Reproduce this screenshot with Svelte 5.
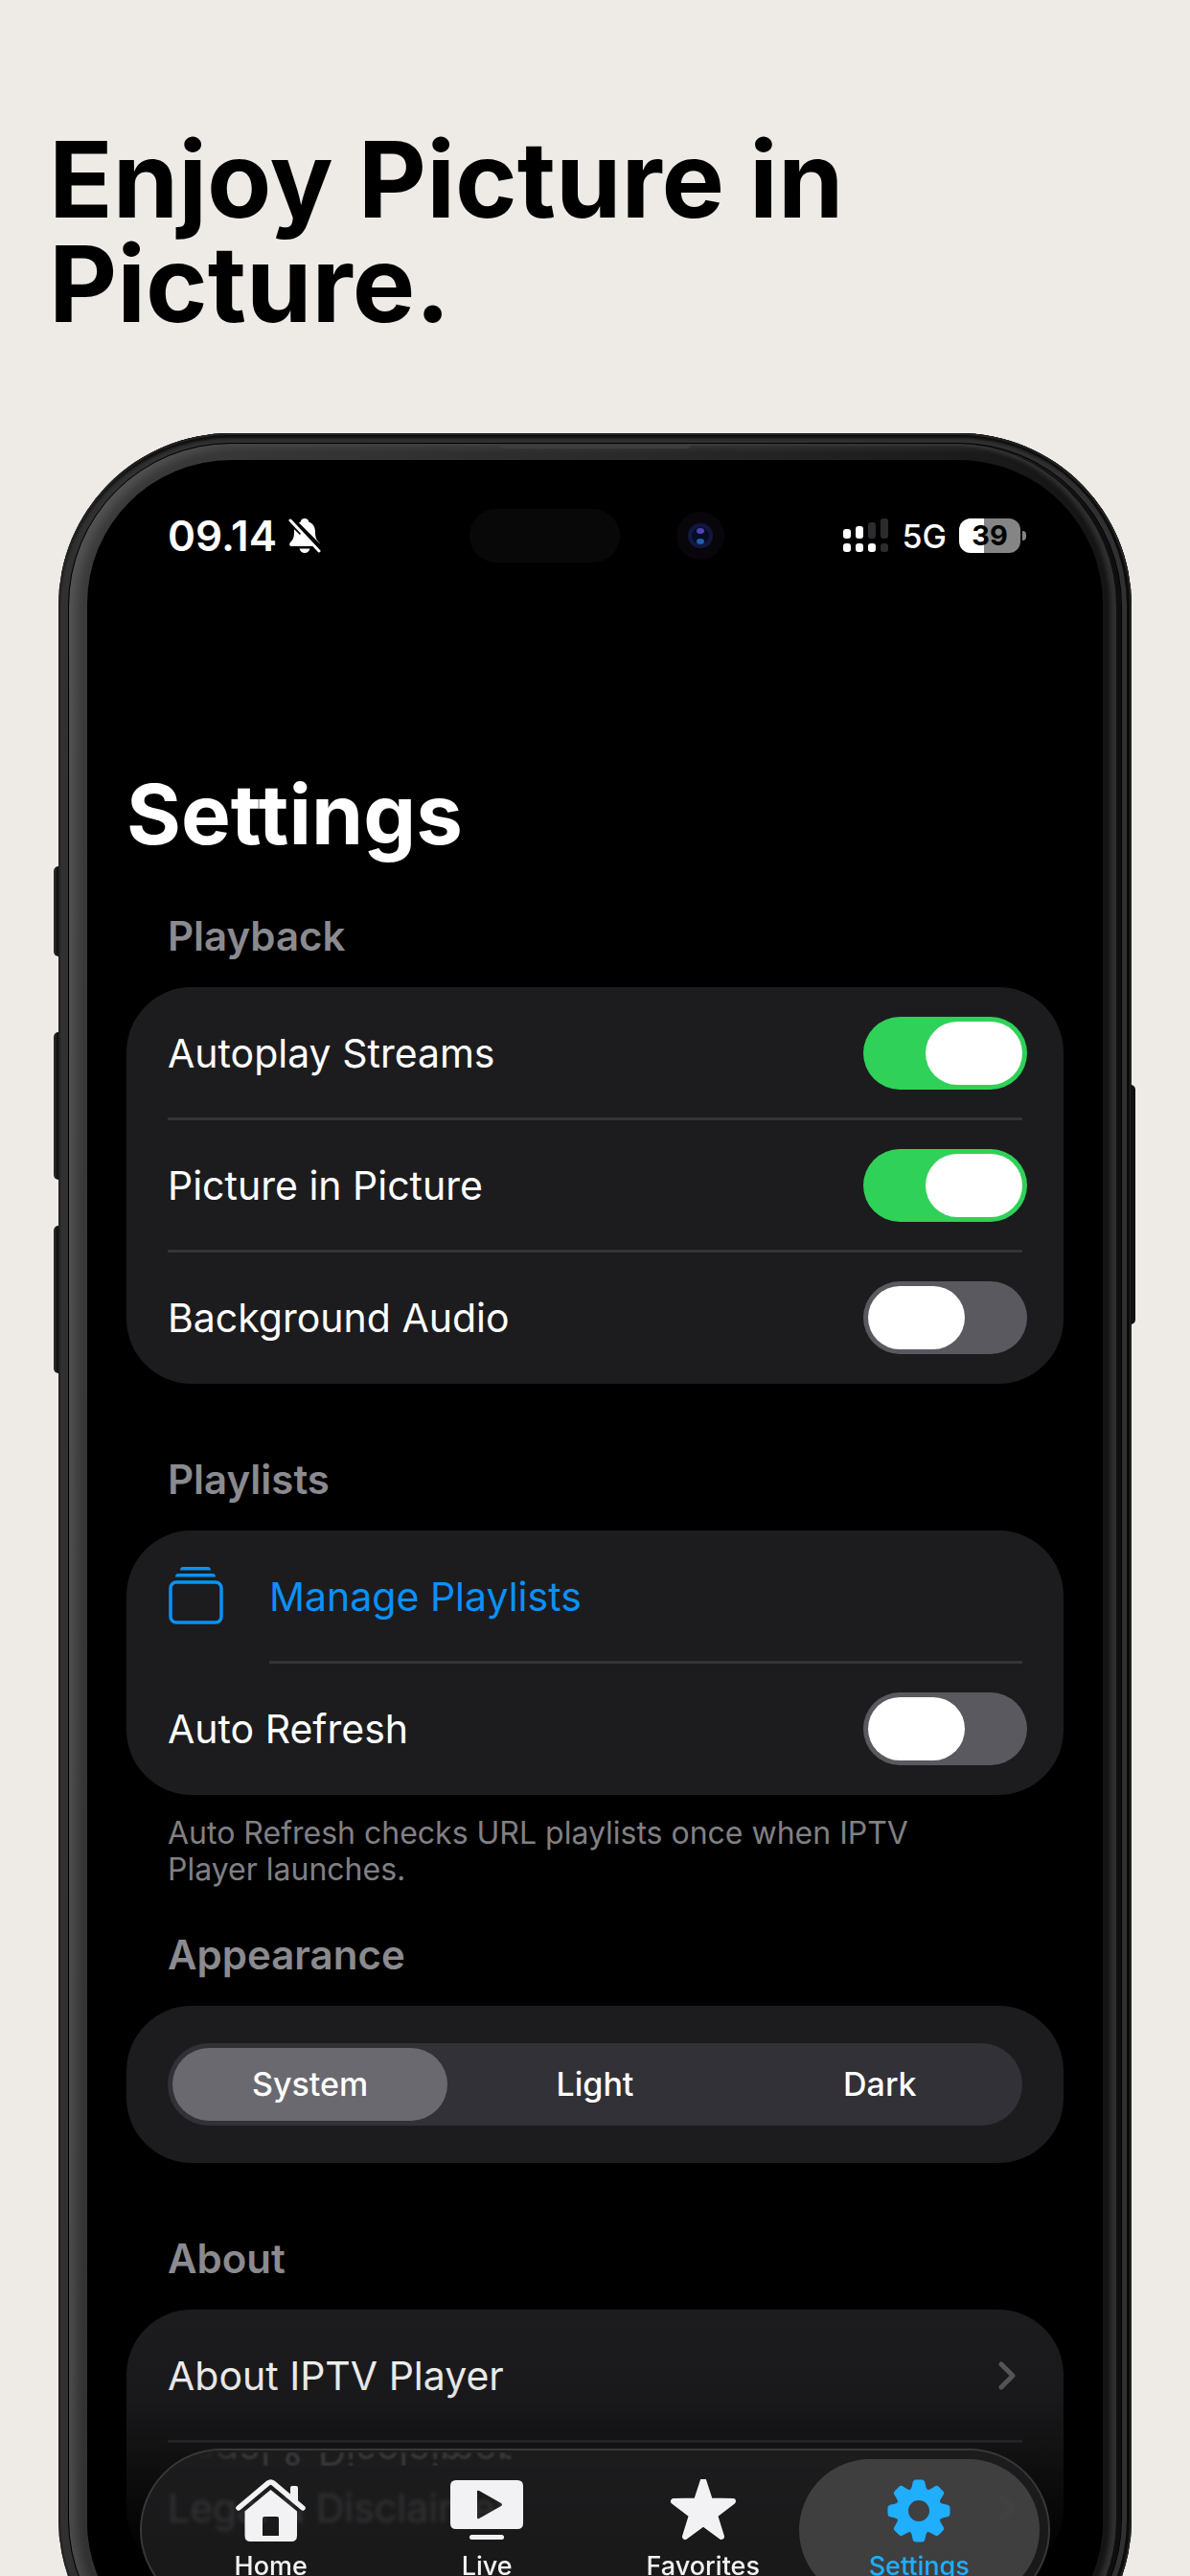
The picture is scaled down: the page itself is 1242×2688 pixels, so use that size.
<script>
    let playback = $state([
        { id: 'autoplay', label: 'Autoplay Streams', on: true },
        { id: 'pip', label: 'Picture in Picture', on: true },
        { id: 'background', label: 'Background Audio', on: false }
    ]);
    let autoRefresh = $state(false);
    let appearance = $state('System');

    const themes = ['System', 'Light', 'Dark'];
    const teeth = [0, 45, 90, 135, 180, 225, 270, 315];
    const signal = [10, 13, 17, 21];
</script>

{#snippet chevron()}
    <svg class="chevron" width="18" height="30" viewBox="0 0 18 30" aria-hidden="true">
        <path d="M3 3 L15 15 L3 27" fill="none" stroke="currentColor" stroke-width="5" stroke-linecap="round" stroke-linejoin="round" />
    </svg>
{/snippet}

<main>
    <p class="headline">Enjoy Picture in<br />Picture.</p>

    <div class="phone">
        <span class="side left action"></span>
        <span class="side left up"></span>
        <span class="side left down"></span>
        <span class="side right"></span>
        <div class="bezel">
            <span class="speaker"></span>
            <div class="screen">
                <header class="status">
                    <div class="status-left">
                        <span class="time">09.14</span>
                        <svg width="34" height="38" viewBox="0 0 34 38" aria-label="Silent">
                            <path d="M17 1 c2.6 0 4 1.6 4.2 3.4 c4.600 1.700 6.800 5.600 6.800 10.600 c0 6.500 1.400 8.200 4 11 c1.600 2.200 .7 4-1.500 4 H3.500 c-2.200 0-3.100-1.800-1.500-4 c2.600-2.800 4-4.500 4-11 c0-5 2.200-8.900 6.800-10.600 C13 2.600 14.400 1 17 1z" fill="#fff" />
                            <path d="M11.500 32.500 h11 c-.6 2.600-2.800 4.500-5.500 4.500 s-4.900-1.900-5.500-4.500z" fill="#fff" />
                            <path d="M3 1 L36 34" stroke="#000" stroke-width="5" />
                            <path d="M-1 1 L14 16" stroke="#000" stroke-width="6" />
                            <path d="M2 3 L32 35" stroke="#fff" stroke-width="3" stroke-linecap="round" />
                        </svg>
                    </div>
                    <div class="island">
                        <span class="pill"></span>
                        <svg width="50" height="50" viewBox="0 0 50 50" aria-hidden="true">
                            <circle cx="25" cy="25" r="25" fill="#08060b" />
                            <circle cx="25" cy="25" r="13" fill="#11183f" />
                            <circle cx="25" cy="25" r="9" fill="#080b26" />
                            <ellipse cx="25" cy="20" rx="4" ry="3" fill="#4b45b8" />
                            <ellipse cx="25" cy="31" rx="4" ry="3" fill="#1f5fa8" />
                        </svg>
                    </div>
                    <div class="status-right">
                        <svg width="50" height="36" viewBox="0 0 50 36" aria-label="Signal">
                            {#each signal as h, i}
                                <rect x={i * 13 + 1} y={21 - h} width="8" height={h} rx="3" fill={i < 2 ? '#fff' : '#2c2c2e'} />
                                <rect x={i * 13 + 1} y="26" width="8" height="9" rx="3" fill={i < 3 ? '#fff' : '#2c2c2e'} />
                            {/each}
                        </svg>
                        <span class="network">5G</span>
                        <span class="battery">39</span>
                    </div>
                </header>

                <h1>Settings</h1>

                <section>
                    <h2>Playback</h2>
                    <div class="card">
                        {#each playback as item (item.id)}
                            <div class="row">
                                <label for={item.id}>{item.label}</label>
                                <input id={item.id} class="toggle" type="checkbox" bind:checked={item.on} />
                            </div>
                        {/each}
                    </div>
                </section>

                <section class="with-note">
                    <h2>Playlists</h2>
                    <div class="card">
                        <a class="row-link" href="#playlists">
                            <svg width="58" height="62" viewBox="0 0 58 62" aria-hidden="true">
                                <rect x="3" y="16" width="53" height="42" rx="6" fill="none" stroke="currentColor" stroke-width="3.500" />
                                <path d="M8 10.500 q0-3.500 3-3.500 h36 q3 0 3 3.500z M13 3.500 q0-3.500 3-3.500 h26 q3 0 3 3.500z" fill="currentColor" />
                            </svg>
                            <span class="row-label">Manage Playlists</span>
                        </a>
                        <div class="row">
                            <label for="refresh">Auto Refresh</label>
                            <input id="refresh" class="toggle" type="checkbox" bind:checked={autoRefresh} />
                        </div>
                    </div>
                    <p class="note">Auto Refresh checks URL playlists once when IPTV<br />Player launches.</p>
                </section>

                <section>
                    <h2>Appearance</h2>
                    <div class="card padded">
                        <div class="segments" role="radiogroup" aria-label="Appearance">
                            {#each themes as theme}
                                <label class:selected={appearance === theme}>
                                    <input type="radio" name="theme" value={theme} bind:group={appearance} />
                                    {theme}
                                </label>
                            {/each}
                        </div>
                    </div>
                </section>

                <section>
                    <h2>About</h2>
                    <div class="card">
                        <a class="row" href="#about">About IPTV Player {@render chevron()}</a>
                        <a class="row behind" href="#legal">Legal &amp; Disclaimer {@render chevron()}</a>
                    </div>
                </section>

                <div class="fade"></div>

                <nav class="tabs">
                    <div class="reflection" aria-hidden="true"><span>Legal &amp; Disclaimer</span></div>
                    <a href="#home">
                        <svg width="73" height="66" viewBox="0 0 73 66" aria-hidden="true">
                            <path d="M57 22 V9 q0-2 2-2 h4 q2 0 2 2 V28z" fill="currentColor" />
                            <path d="M3 30 L34 4 q2.500-2 5 0 L70 30" fill="none" stroke="currentColor" stroke-width="5.500" stroke-linecap="round" />
                            <path fill-rule="evenodd" d="M36.500 11 L64 33.500 V59 q0 6-6 6 H15.500 q-6 0-6-6 V33.500z M30 39 q-2 0-2 2 V59 H45 V41 q0-2-2-2z" fill="currentColor" />
                        </svg>
                        <span>Home</span>
                    </a>
                    <a href="#live">
                        <svg width="76" height="66" viewBox="0 0 76 66" aria-hidden="true">
                            <path fill-rule="evenodd" d="M6 1 H70 q6 0 6 6 V46 q0 6-6 6 H6 q-6 0-6-6 V7 q0-6 6-6z M28 13 V40 q0 2 2 1 L53 28 q2-1.500 0-3 L30 12 q-2-1-2 1z" fill="currentColor" />
                            <rect x="20" y="58" width="36" height="5" rx="2.500" fill="currentColor" />
                        </svg>
                        <span>Live</span>
                    </a>
                    <a href="#favorites">
                        <svg width="70" height="66" viewBox="0 0 70 66" aria-hidden="true">
                            <path d="M35 1 L42 22.500 L66 23 L47 37.500 L54 60 L35 46 L16 60 L23 37.500 L4 23 L28 22.500z" fill="currentColor" stroke="currentColor" stroke-width="6" stroke-linejoin="round" />
                        </svg>
                        <span>Favorites</span>
                    </a>
                    <a href="#settings" class="active" aria-current="page">
                        <svg width="66" height="66" viewBox="-33 -33 66 66" aria-hidden="true">
                            <circle r="17.500" fill="none" stroke="currentColor" stroke-width="13" />
                            {#each teeth as angle}
                                <path transform="rotate({angle})" d="M-10 -20 Q-7.500 -23 -6.500 -29 Q-6 -32.500 -3 -32.500 H3 Q6 -32.500 6.500 -29 Q7.500 -23 10 -20z" fill="currentColor" />
                            {/each}
                        </svg>
                        <span>Settings</span>
                    </a>
                </nav>
            </div>
        </div>
    </div>
</main>

<style>
    :global(body) {
        background: #eeebe6;
    }

    main {
        height: 100vh;
        overflow: hidden;
        box-sizing: border-box;
        padding: 133px 61px 0;
        background: #eeebe6;
        font-family: Inter, "Liberation Sans", sans-serif;
        color: #fff;
    }

    a {
        color: inherit;
        text-decoration: none;
    }

    .headline {
        margin: 0 0 101px -10px;
        font-size: 110px;
        line-height: 109px;
        font-weight: 700;
        color: #000;
    }

    .phone {
        position: relative;
        display: flex;
        box-sizing: border-box;
        aspect-ratio: 1120 / 2357;
        padding: 10px;
        border-radius: 180px;
        background: #303031;
        box-shadow: inset 0 0 0 2px #232324, inset -3px 0 0 2px #0b0b0b, inset 0 5px 3px #0c0c0c;
    }

    .side {
        position: absolute;
        width: 5px;
        background: linear-gradient(90deg, #303031, #0a0a0a);
    }

    .side.left {
        left: -5px;
        border-radius: 5px 0 0 5px;
    }

    .side.action {
        top: 452px;
        height: 94px;
    }

    .side.up {
        top: 625px;
        height: 154px;
    }

    .side.down {
        top: 827px;
        height: 154px;
    }

    .side.right {
        right: -4px;
        top: 680px;
        height: 250px;
        border-radius: 0 5px 5px 0;
        background: #101010;
    }

    .bezel {
        position: relative;
        flex: 1;
        display: flex;
        padding: 17px 19px;
        border: 1px solid #000;
        border-radius: 170px;
        background: linear-gradient(98deg, #3c3c3c, #2a2a2a 40%, #151515 75%);
        box-shadow: inset 8px 3px 10px rgba(255, 255, 255, 0.12), inset -5px 0 0 #0e0e0e, inset -11px 0 4px #303030;
    }

    .speaker {
        position: absolute;
        top: 0;
        left: 50%;
        width: 206px;
        height: 5px;
        margin-left: -103px;
        background: #3d3d3d;
        clip-path: polygon(0 0, 100% 0, 97% 100%, 3% 100%);
    }

    .screen {
        position: relative;
        flex: 1;
        overflow: hidden;
        padding: 51px 41px 0;
        border-radius: 150px;
        background: #000;
    }

    .status {
        display: grid;
        grid-template-columns: 1fr 266px 1fr;
        align-items: center;
        height: 56px;
        padding: 0 39px 0 43px;
        margin-bottom: 211px;
    }

    .status-left,
    .status-right,
    .island {
        display: flex;
        align-items: center;
    }

    .status-left {
        gap: 12px;
    }

    .status-right {
        justify-content: flex-end;
        gap: 13px;
    }

    .island {
        justify-content: space-between;
    }

    .pill {
        width: 157px;
        height: 56px;
        border-radius: 28px;
        background: #080808;
    }

    .time {
        font-size: 44px;
        font-weight: 600;
    }

    .network {
        font-size: 34px;
        font-weight: 500;
    }

    .battery {
        position: relative;
        width: 64px;
        margin-right: 6px;
        border-radius: 12px;
        background: linear-gradient(90deg, #fff 40%, #858585 40%);
        color: #000;
        font-size: 29px;
        line-height: 36px;
        font-weight: 700;
        text-align: center;
    }

    .battery::after {
        content: '';
        position: absolute;
        right: -6px;
        top: 13px;
        width: 4px;
        height: 10px;
        border-radius: 0 4px 4px 0;
        background: #858585;
    }

    h1 {
        margin: 0 0 51px;
        font-size: 87px;
        line-height: 104px;
        font-weight: 700;
    }

    section + section {
        margin-top: 76px;
    }

    .with-note + section {
        margin-top: 46px;
    }

    h2 {
        margin: 0 0 29px;
        padding-left: 43px;
        font-size: 42px;
        line-height: 48px;
        font-weight: 600;
        color: #8a8a8f;
    }

    .card {
        padding: 0 43px;
        border-radius: 68px;
        background: #1c1c1e;
    }

    .card.padded {
        padding: 39px 43px;
    }

    .row,
    .row-link {
        display: flex;
        align-items: center;
        justify-content: space-between;
        box-sizing: border-box;
        height: 138px;
        font-size: 41px;
    }

    .row:not(:last-child),
    .row-link .row-label {
        box-shadow: 0 1px #343437, inset 0 -2px #343437;
    }

    .row label {
        flex: 1;
    }

    .row-link {
        gap: 48px;
        color: #0a91f8;
    }

    .row-link .row-label {
        display: flex;
        flex: 1;
        align-items: center;
        box-sizing: border-box;
        height: 138px;
    }

    .toggle {
        appearance: none;
        width: 171px;
        height: 76px;
        margin: 0 -5px 0 0;
        padding: 5px;
        border-radius: 38px;
        background: #5a595f;
    }

    .toggle::before {
        content: '';
        display: block;
        width: 101px;
        height: 66px;
        border-radius: 33px;
        background: #fff;
    }

    .toggle:checked {
        background: #30d158;
    }

    .toggle:checked::before {
        margin-left: auto;
    }

    .note {
        margin: 21px 0 0;
        padding-left: 43px;
        font-size: 32px;
        line-height: 38px;
        color: #808085;
    }

    .segments {
        display: grid;
        grid-template-columns: repeat(3, 1fr);
        border-radius: 43px;
        background: #323137;
    }

    .segments label {
        margin: 5px;
        border-radius: 38px;
        font-size: 34px;
        line-height: 76px;
        font-weight: 500;
        text-align: center;
    }

    .segments .selected {
        background: #6a696f;
    }

    .segments input {
        position: absolute;
        opacity: 0;
    }

    .chevron {
        margin-right: 7px;
        color: #5c5c60;
    }

    .behind {
        position: relative;
        z-index: 2;
        color: #7c7c7e;
    }

    .fade {
        position: absolute;
        left: 0;
        right: 0;
        bottom: 0;
        height: 360px;
        z-index: 1;
        background: linear-gradient(transparent, rgba(0, 0, 0, 0.12) 22%, rgba(0, 0, 0, 0.35) 36%, rgba(0, 0, 0, 0.9) 64%, #000);
    }

    .tabs {
        position: absolute;
        left: 55px;
        right: 55px;
        bottom: 56px;
        z-index: 3;
        display: grid;
        grid-template-columns: repeat(4, 1fr);
        box-sizing: border-box;
        height: 170px;
        padding: 9px 22px;
        border: 2px solid #38383a;
        border-radius: 85px;
        background: rgba(31, 31, 33, 0.8);
        backdrop-filter: blur(2px);
    }

    /* the row under the glass shows once more, upside down, along the top rim */
    .reflection {
        position: absolute;
        left: 29px;
        top: 2px;
        height: 14px;
        overflow: hidden;
        display: flex;
        align-items: flex-end;
        font-size: 41px;
        line-height: 30px;
        color: #3a3a3c;
        filter: blur(1px);
        mask-image: linear-gradient(90deg, transparent 8%, #000 20%);
    }

    .reflection span {
        transform: scaleY(-1);
    }

    .tabs a {
        position: relative;
        display: flex;
        flex-direction: column;
        align-items: center;
        gap: 9px;
        padding-top: 21px;
        font-size: 27px;
        line-height: 32px;
        font-weight: 500;
        color: #f2f2f4;
    }

    .tabs a svg,
    .tabs a span {
        position: relative;
    }

    .tabs .active {
        color: #20aeff;
    }

    .tabs .active::before {
        content: '';
        position: absolute;
        inset: 0 -13px;
        border-radius: 74px;
        background: rgba(72, 72, 74, 0.8);
    }
</style>
